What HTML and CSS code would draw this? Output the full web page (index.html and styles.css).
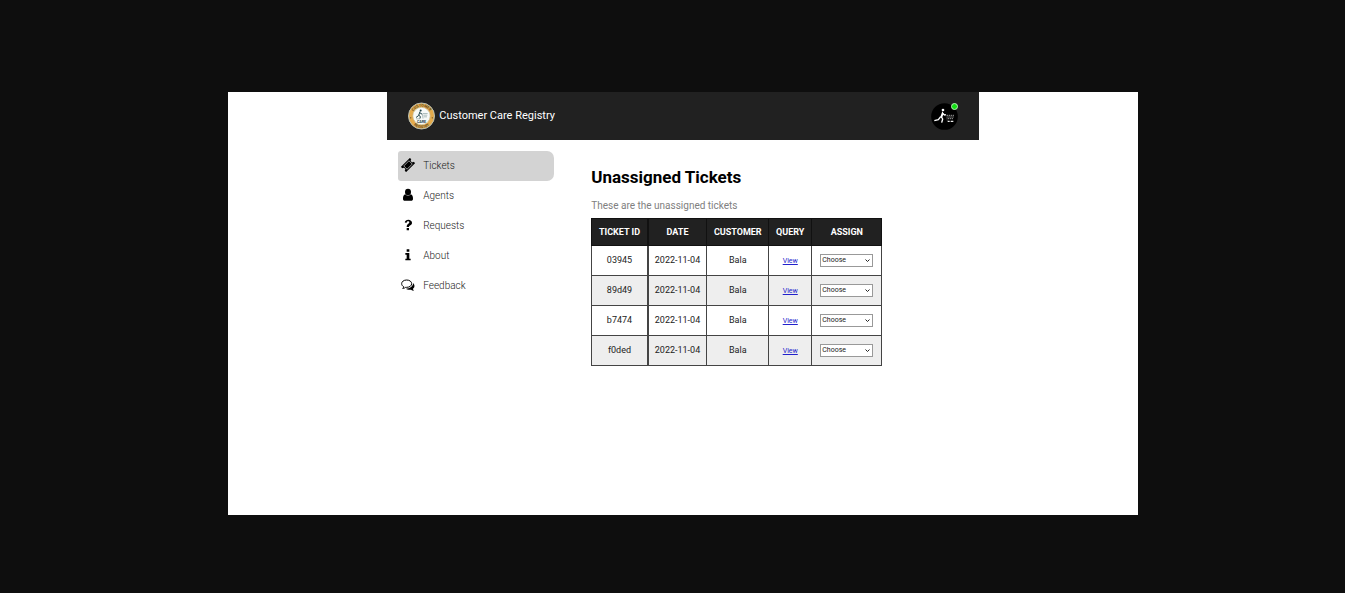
FILE: index.html
```
<!DOCTYPE html>
<html lang="en">
<head>
<meta charset="utf-8">
<title>Customer Care Registry</title>
<link rel="stylesheet" href="styles.css">
</head>
<body>
<div class="stage">
  <div class="app">
    <header class="topbar">
      <div class="brand">
        <svg class="badge" viewBox="0 0 81 81" aria-hidden="true">
          <defs>
            <path id="arc-top" d="M12 41a28.500 28.500 0 0 1 57 0"/>
            <path id="arc-bottom" d="M5 41a35.500 35.500 0 0 0 71 0"/>
          </defs>
          <circle cx="40.500" cy="40.500" r="39" fill="#e4ab4c" stroke="#b9c0b4" stroke-width="3"/>
          <circle cx="40.500" cy="40.500" r="26" fill="#f7faf8" stroke="#c8bd94" stroke-width="2"/>
          <text class="badge-text"><textPath href="#arc-top" startOffset="50%">CUSTOMER</textPath></text>
          <text class="badge-text"><textPath href="#arc-bottom" startOffset="50%">REGISTRY</textPath></text>
          <circle cx="8" cy="46" r="2" fill="#5d4a24"/><circle cx="73" cy="46" r="2" fill="#5d4a24"/>
          <circle cx="38" cy="24" r="3" fill="#1d4248"/>
          <path d="M36 27l-4 12-8 6M32 38l5 4-1 6M36 31l6 4" fill="none" stroke="#1d4248" stroke-width="3"/>
          <path d="M43 33l2 15M24 49h12" fill="none" stroke="#1d4248" stroke-width="1"/>
          <path d="M45 33h14M46 38h12M47 43h10" stroke="#8ba1a1" stroke-width="2"/>
          <text class="badge-care" x="40.500" y="60">CARE</text>
        </svg>
        <span class="brand-name">Customer Care Registry</span>
      </div>
      <div class="avatar">
        <svg viewBox="0 0 81 81" aria-hidden="true">
          <circle cx="40.500" cy="40.500" r="40" fill="#000"/>
          <circle cx="36" cy="21" r="4" fill="#fff"/>
          <path d="M34 25l-6 17 5 3 5-13z" fill="#fff"/>
          <path d="M29 41l-7 9-12 3M31 42l4 6-3 11M34 31l7 5 4-1" fill="none" stroke="#fff" stroke-width="4"/>
          <path d="M44 34l5 20" stroke="#777" stroke-width="1"/>
          <path d="M47 37h23M49 42h20M50 47h18" stroke="#999" stroke-width="3" stroke-dasharray="4 2"/>
          <path d="M50 55h6M59 55h8" stroke="#eee" stroke-width="4"/>
        </svg>
        <span class="status"></span>
      </div>
    </header>
    <div class="content">
      <nav class="menu" aria-label="Main">
        <a class="menu-item active" href="#tickets">
          <svg class="icon" viewBox="0 0 42 42" aria-hidden="true"><g transform="rotate(-45 21 21)"><path d="M2 10h38v6a5 5 0 0 0 0 10v6H2v-6a5 5 0 0 0 0-10z"/><path d="M10 14h22v14H10z" fill="none" stroke="#d3d3d3" stroke-width="2"/></g></svg>
          Tickets</a>
        <a class="menu-item" href="#agents">
          <svg class="icon" viewBox="0 0 42 42" aria-hidden="true"><ellipse cx="21" cy="12" rx="9" ry="10"/><path d="M13 19c3 5 13 5 16 0 5 1 7 6 7 13 0 4-2 6-6 6H12c-4 0-6-2-6-6 0-7 2-12 7-13z"/></svg>
          Agents</a>
        <a class="menu-item" href="#requests">
          <svg class="icon" viewBox="0 0 42 42" aria-hidden="true"><path d="M11 13c2-5 5-8 11-8 6 0 11 4 11 9 0 4-2 6-5 8-3 2-4 3-4 5h-7c0-6 2-8 5-10 2-1 3-2 3-4s-1-3-3-3c-3 0-4 1-6 5zM17 30h7v7h-7z"/></svg>
          Requests</a>
        <a class="menu-item" href="#about">
          <svg class="icon" viewBox="0 0 42 42" aria-hidden="true"><path d="M17 4h8v7h-8zM13 15h12v17h4v5H13v-5h4V20h-4z"/></svg>
          About</a>
        <a class="menu-item" href="#feedback">
          <svg class="icon" viewBox="0 0 42 42" aria-hidden="true"><path d="M17 6c9 0 15 5 15 11s-6 11-15 11h-3c-2 2-5 3-9 3 2-1 3-3 3-5-4-2-6-5-6-9C2 11 8 6 17 6z" fill="none" stroke="#000" stroke-width="3"/><path d="M36 15c6 5 6 13 0 17 0 2 1 4 3 6-4 0-7-1-9-3-6 1-12 0-15-3 11 0 22-7 21-17z"/></svg>
          Feedback</a>
      </nav>
      <main class="main">
        <h1 class="title">Unassigned Tickets</h1>
        <p class="subtitle">These are the unassigned tickets</p>
        <table class="tickets">
          <colgroup><col class="c-id"><col class="c-date"><col class="c-customer"><col class="c-query"><col class="c-assign"></colgroup>
          <thead><tr><th>TICKET ID</th><th>DATE</th><th>CUSTOMER</th><th>QUERY</th><th>ASSIGN</th></tr></thead>
          <tbody>
            <tr><td>03945</td><td>2022-11-04</td><td>Bala</td><td><a class="view" href="#03945">View</a></td><td><div class="choose"><select aria-label="Assign ticket 03945"><option>Choose</option></select><svg viewBox="0 0 5 4" aria-hidden="true"><path d="M0.500 0.500l2 2 2-2"/></svg></div></td></tr>
            <tr><td>89d49</td><td>2022-11-04</td><td>Bala</td><td><a class="view" href="#89d49">View</a></td><td><div class="choose"><select aria-label="Assign ticket 89d49"><option>Choose</option></select><svg viewBox="0 0 5 4" aria-hidden="true"><path d="M0.500 0.500l2 2 2-2"/></svg></div></td></tr>
            <tr><td>b7474</td><td>2022-11-04</td><td>Bala</td><td><a class="view" href="#b7474">View</a></td><td><div class="choose"><select aria-label="Assign ticket b7474"><option>Choose</option></select><svg viewBox="0 0 5 4" aria-hidden="true"><path d="M0.500 0.500l2 2 2-2"/></svg></div></td></tr>
            <tr><td>f0ded</td><td>2022-11-04</td><td>Bala</td><td><a class="view" href="#f0ded">View</a></td><td><div class="choose"><select aria-label="Assign ticket f0ded"><option>Choose</option></select><svg viewBox="0 0 5 4" aria-hidden="true"><path d="M0.500 0.500l2 2 2-2"/></svg></div></td></tr>
          </tbody>
        </table>
      </main>
    </div>
  </div>
</div>
</body>
</html>
```
FILE: styles.css
```
* { box-sizing: border-box; }
body {
  margin: 0;
  min-height: 100vh;
  padding: 92px 207px 78px 228px;
  display: flex;
  background: #0e0e0e;
  font-family: Roboto, "Liberation Sans", sans-serif;
  color: #222;
}
.stage { flex: 1; background: #fff; }
.app { width: 65%; margin: 0 auto; }
.topbar {
  display: flex;
  align-items: center;
  justify-content: space-between;
  padding: 10px 21px;
  background: #212121;
}
.brand { display: flex; align-items: center; gap: 4px; }
.badge { width: 27px; height: 28px; }
.badge-text { font-size: 11px; font-weight: 700; text-anchor: middle; fill: #5d4a24; }
.badge-care { font-size: 11px; font-weight: 700; text-anchor: middle; fill: #1d4248; }
.brand-name { font-size: 11px; line-height: 16px; color: #fff; }
.avatar { position: relative; width: 27px; height: 27px; }
.avatar svg { display: block; }
.status {
  position: absolute;
  top: 0;
  right: 0;
  width: 7px;
  height: 7px;
  border: 1px solid #b8f5b8;
  border-radius: 50%;
  background: #12e012;
}
.content { display: flex; gap: 37px; padding: 11px; }
.menu { flex: 0 0 156px; }
.menu-item {
  display: flex;
  align-items: center;
  gap: 8px;
  height: 30px;
  padding: 0 0 2px 3px;
  border-radius: 3px 7px 7px 3px;
  font-size: 10px;
  font-weight: 300;
  color: #222;
  text-decoration: none;
}
.active { background: #d3d3d3; }
.icon { width: 14px; height: 14px; }
.main { flex: 1; padding-top: 16px; }
.title { margin: 0; font-size: 17px; line-height: 20px; color: #000; }
.subtitle { margin: 12px 0 6px; font-size: 10px; line-height: 13px; color: #808080; }
.tickets {
  table-layout: fixed;
  width: 291px;
  border-collapse: collapse;
  font-size: 9px;
  text-align: center;
}
.c-id { width: 56px; }
.c-date { width: 59px; }
.c-customer { width: 62px; }
.c-query { width: 43px; }
.tickets th { height: 27px; padding: 0; border: 1px solid #111; background: #212121; color: #fff; }
.tickets td { height: 30px; padding: 0 0 1px; border: 1px solid #444; }
.tickets th:first-child, .tickets td:first-child { border-right-width: 2px; }
.tickets tbody tr:nth-child(even) { background: #eee; }
.view { font-size: 7px; color: #22c; }
.choose { position: relative; width: 53px; margin: 0 auto; }
.choose select {
  appearance: none;
  display: block;
  width: 100%;
  height: 13px;
  padding: 0 1px;
  border: 1px solid #999;
  border-radius: 0;
  background: #fff;
  font-family: inherit;
  font-size: 7px;
  color: #222;
}
.choose svg {
  position: absolute;
  top: 5px;
  right: 3px;
  width: 5px;
  height: 4px;
  fill: none;
  stroke: #222;
  pointer-events: none;
}
```
